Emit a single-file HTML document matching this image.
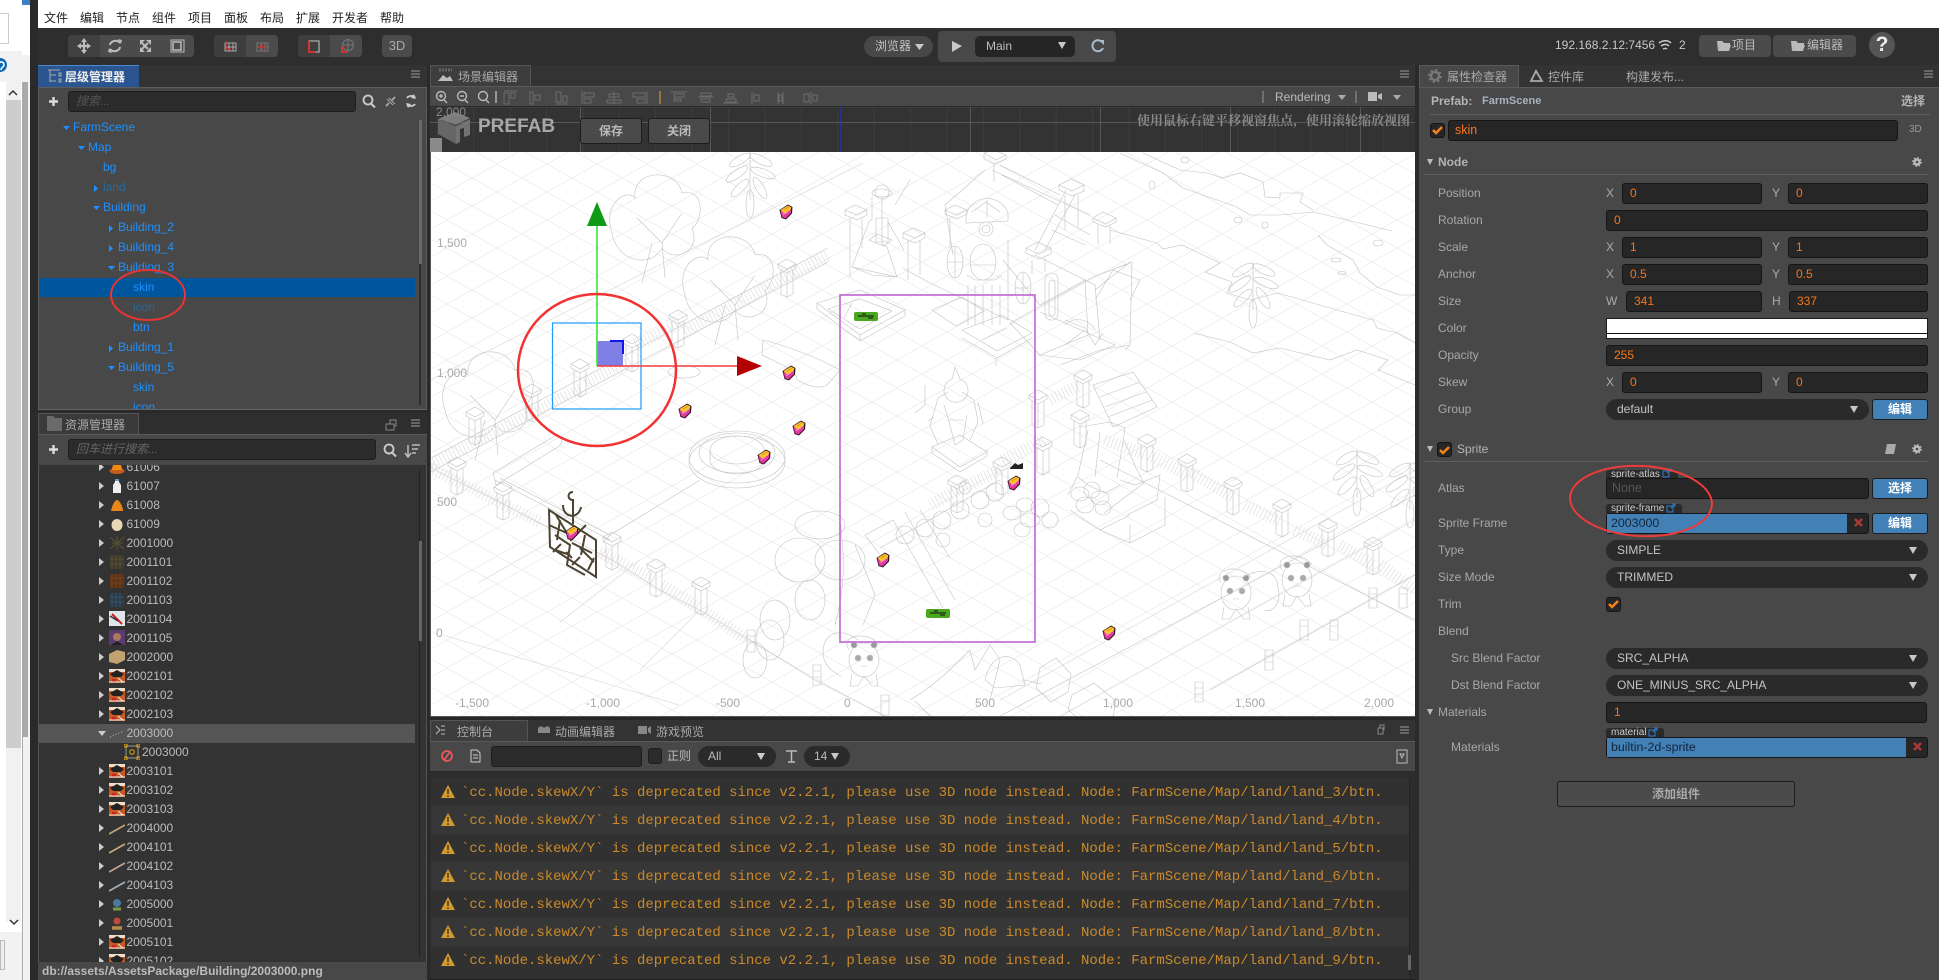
<!DOCTYPE html>
<html lang="zh"><head><meta charset="utf-8"><title>Cocos Creator</title>
<style>
html,body{margin:0;padding:0;width:1939px;height:980px;overflow:hidden;background:#2a2a2a}
body{position:relative;font:12px/16px "Liberation Sans","Noto Sans CJK SC",sans-serif;color:#bbb}
div,span.a{position:absolute;box-sizing:border-box}
.t{position:absolute;white-space:nowrap;line-height:16px}
.b{font-weight:bold}
.tree{color:#1e90ff}
.tree .t{height:16px}
.f{background:#262626;border:1px solid #161616;border-radius:3px;height:21px;color:#f5761c;line-height:19px;padding-left:7px;white-space:nowrap}
.s{background:#2a2a2a;border-radius:11px;height:21px;color:#c4c4c4;line-height:21px;padding-left:11px;white-space:nowrap}
.s:after{content:"";position:absolute;right:11px;top:7px;border-left:4px solid transparent;border-right:4px solid transparent;border-top:7px solid #c8c8c8}
.btn{background:#4281b7;border:1px solid #1c1c1c;border-radius:3px;color:#fff;font-weight:bold;text-align:center;line-height:19px;height:21px}
.lb{position:absolute;left:1438px;color:#a8a8a8;white-space:nowrap;line-height:16px}
.tag{background:#2a2a2a;border-radius:3px 3px 0 0;height:10px;font-size:10px;line-height:10px;color:#ccc;padding-left:5px;white-space:nowrap}
.tb{background:#4b4b4b;border-radius:4px;height:22px;top:35px}
.log{left:431px;width:978px;height:28px;font:14px/30px "Liberation Mono",monospace;letter-spacing:-.023px;color:#c98a2c;padding-left:30px;white-space:pre}
.r{position:relative;height:19px;line-height:19px;color:#bcbcbc;white-space:nowrap}
.r i{position:absolute;left:61px;top:5px;border-left:5px solid #ccc;border-top:4.5px solid transparent;border-bottom:4.5px solid transparent}
.r svg{position:absolute;left:71px;top:1px;width:16px;height:16px}
.r span{position:absolute;left:88.5px;top:0}
svg{display:block}
</style></head><body>

<!-- left strip -->
<div style="left:0;top:0;width:30px;height:980px;background:#f2f2f2"></div>
<div style="left:0;top:0;width:22px;height:51px;background:#fff"></div>
<div style="left:-6px;top:13px;width:15px;height:31px;border:1px solid #ccc;background:#fff"></div>
<div style="left:22px;top:0;width:8px;height:5px;background:#3c7fc4"></div>
<div style="left:22px;top:5px;width:8px;height:50px;background:#fff"></div>
<div style="left:0;top:82px;width:22px;height:850px;background:#fff"></div>
<div style="left:6px;top:82px;width:15px;height:840px;background:#f1f1f1"></div>
<div style="left:6px;top:100px;width:15px;height:648px;background:#cdcdcd"></div>
<div style="left:22px;top:82px;width:1px;height:898px;background:#aaa"></div>
<div style="left:23px;top:82px;width:5px;height:655px;background:#a9a9a9"></div>
<div style="left:-7px;top:58px;width:14px;height:14px;border-radius:50%;background:#0b6ab8"></div>
<div style="left:0;top:940px;width:5px;height:30px;border:1px solid #bbb;background:#eee"></div>
<div style="left:30px;top:0;width:8px;height:980px;background:#2a2a2a"></div>

<!-- top menu -->
<div style="left:38px;top:0;width:1901px;height:28px;background:#fff"></div>
<span class="t" style="left:44px;top:10px;color:#222">文件</span>
<span class="t" style="left:80px;top:10px;color:#222">编辑</span>
<span class="t" style="left:116px;top:10px;color:#222">节点</span>
<span class="t" style="left:152px;top:10px;color:#222">组件</span>
<span class="t" style="left:188px;top:10px;color:#222">项目</span>
<span class="t" style="left:224px;top:10px;color:#222">面板</span>
<span class="t" style="left:260px;top:10px;color:#222">布局</span>
<span class="t" style="left:296px;top:10px;color:#222">扩展</span>
<span class="t" style="left:332px;top:10px;color:#222">开发者</span>
<span class="t" style="left:380px;top:10px;color:#222">帮助</span>

<!-- toolbar -->
<div style="left:38px;top:28px;width:1901px;height:37px;background:#2e2e2e"></div>
<div class="tb" style="left:68px;width:126px"></div>
<div class="tb" style="left:68px;width:32px;background:#414141;border-radius:4px 0 0 4px"></div>
<div class="tb" style="left:214px;width:64px"></div>
<div class="tb" style="left:214px;width:32px;background:#3e3e3e;border-radius:4px 0 0 4px"></div>
<div class="tb" style="left:298px;width:64px"></div>
<div class="tb" style="left:298px;width:32px;background:#3e3e3e;border-radius:4px 0 0 4px"></div>
<div class="tb" style="left:382px;width:30px;text-align:center;line-height:22px;font-size:13px;color:#aaa">3D</div>
<div style="left:864px;top:36px;width:69px;height:21px;background:#484848;border-radius:11px;line-height:21px;padding-left:11px;color:#c4c4c4">浏览器</div>
<div style="left:938px;top:31px;width:178px;height:31px;background:#484848;border-radius:4px"></div>
<div style="left:975px;top:36px;width:100px;height:21px;background:#252525;border-radius:5px;line-height:21px;padding-left:11px;color:#bbb">Main</div>
<span class="t" style="left:1555px;top:37px;color:#c8c8c8;font-size:12px">192.168.2.12:7456</span>
<span class="t" style="left:1679px;top:37px;color:#c8c8c8">2</span>
<div class="tb" style="left:1699px;width:72px;color:#bbb;line-height:21px;padding-left:33px" >项目</div>
<div class="tb" style="left:1773px;width:83px;color:#bbb;line-height:21px;padding-left:34px">编辑器</div>
<div style="left:1869px;top:32px;width:26px;height:26px;border-radius:50%;background:#555;color:#eee;font:bold 21px/26px 'Liberation Sans',sans-serif;text-align:center">?</div>

<!-- hierarchy -->
<div style="left:38px;top:65px;width:389px;height:22px;background:#333"></div>
<div style="left:38px;top:65px;width:101px;height:23px;background:#2b5590;border-top:1px solid #4b8ad0"></div>
<span class="t b" style="left:65px;top:69px;color:#f0f0f0">层级管理器</span>
<div style="left:38px;top:87px;width:389px;height:323px;background:#484848;border:1px solid #5d5d5d;border-bottom-color:#666"></div>
<div style="left:68px;top:91px;width:288px;height:21px;background:#2b2b2b;border:1px solid #1e1e1e;border-radius:3px;color:#555;font-style:italic;line-height:19px;padding-left:7px">搜索...</div>
<div style="left:39px;top:278px;width:376px;height:19px;background:#00569c"></div>
<div class="tree" style="left:39px;top:116px;width:376px;height:293px;overflow:hidden">
<span class="t" style="left:34px;top:3px">FarmScene</span>
<span class="t" style="left:49px;top:23px">Map</span>
<span class="t" style="left:64px;top:43px">bg</span>
<span class="t" style="left:64px;top:63px;color:#2a6a9a">land</span>
<span class="t" style="left:64px;top:83px">Building</span>
<span class="t" style="left:79px;top:103px">Building_2</span>
<span class="t" style="left:79px;top:123px">Building_4</span>
<span class="t" style="left:79px;top:143px">Building_3</span>
<span class="t" style="left:94px;top:163px">skin</span>
<span class="t" style="left:94px;top:183px;color:#2a6a9a">icon</span>
<span class="t" style="left:94px;top:203px">btn</span>
<span class="t" style="left:79px;top:223px">Building_1</span>
<span class="t" style="left:79px;top:243px">Building_5</span>
<span class="t" style="left:94px;top:263px">skin</span>
<span class="t" style="left:94px;top:283px">icon</span>
</div>
<div style="left:419px;top:120px;width:2px;height:285px;background:#2e2e2e"></div>
<div style="left:419px;top:120px;width:3px;height:144px;background:#6a6a6a"></div>

<!-- assets -->
<div style="left:38px;top:413px;width:389px;height:21px;background:#2e2e2e"></div>
<div style="left:38px;top:413px;width:101px;height:21px;background:#3a3a3a;border:1px solid #555;border-bottom:0"></div>
<span class="t" style="left:65px;top:417px;color:#aaa">资源管理器</span>
<div style="left:38px;top:434px;width:389px;height:31px;background:#484848;border-top:1px solid #5a5a5a"></div>
<div style="left:68px;top:439px;width:308px;height:21px;background:#2b2b2b;border:1px solid #1e1e1e;border-radius:3px;color:#666;font-style:italic;line-height:19px;padding-left:7px">回车进行搜索...</div>
<div style="left:38px;top:465px;width:389px;height:497px;background:#333;overflow:hidden;border-left:1px solid #555;border-right:1px solid #555"></div>
<div style="left:39px;top:724px;width:376px;height:19px;background:#555"></div>
<div style="left:38px;top:465px;width:380px;height:497px;overflow:hidden">
<div style="left:0;top:-7px;width:380px">
<div class="r"><i></i><svg viewBox="0 0 16 16"><ellipse cx="8" cy="12" rx="7.5" ry="3" fill="#c85a1a"/><path d="M3 11C3 6 6 3 8 3s5 3 5 8z" fill="#f08a10"/></svg><span>61006</span></div>
<div class="r"><i></i><svg viewBox="0 0 16 16"><path d="M6 1h4v3l2 3v8H4V7l2-3z" fill="#eee"/><rect x="6" y="1" width="4" height="2" fill="#5a9ad8"/></svg><span>61007</span></div>
<div class="r"><i></i><svg viewBox="0 0 16 16"><path d="M2 14C3 8 6 3 8 3s6 6 6 11z" fill="#e8861a"/></svg><span>61008</span></div>
<div class="r"><i></i><svg viewBox="0 0 16 16"><ellipse cx="8" cy="9" rx="5.5" ry="6" fill="#e8d8b8"/></svg><span>61009</span></div>
<div class="r"><i></i><svg viewBox="0 0 16 16"><path d="M1 2l14 12M1 14L15 2M8 1v14M3 8h11" stroke="#544c34" stroke-width="1.3"/></svg><span>2001000</span></div>
<div class="r"><i></i><svg viewBox="0 0 16 16"><rect x="1" y="1" width="14" height="14" fill="#3f3a2c"/><path d="M3 1v14M7 1v14M11 1v14M1 5h14M1 10h14" stroke="#574f38"/></svg><span>2001101</span></div>
<div class="r"><i></i><svg viewBox="0 0 16 16"><rect x="1" y="1" width="14" height="14" fill="#5a3218"/><path d="M3 1v14M7 1v14M11 1v14M1 5h14M1 10h14" stroke="#74431f"/></svg><span>2001102</span></div>
<div class="r"><i></i><svg viewBox="0 0 16 16"><rect x="1" y="1" width="14" height="14" fill="#2a3a4a"/><path d="M3 1v14M7 1v14M11 1v14M1 5h14M1 10h14" stroke="#3c5064"/></svg><span>2001103</span></div>
<div class="r"><i></i><svg viewBox="0 0 16 16"><rect width="16" height="15" fill="#dfe6ea"/><path d="M3 3l10 10" stroke="#c22" stroke-width="2"/><path d="M1 5l8 5" stroke="#335" stroke-width="1.5"/></svg><span>2001104</span></div>
<div class="r"><i></i><svg viewBox="0 0 16 16"><rect width="16" height="15" fill="#5a3a70"/><circle cx="8" cy="7" r="4" fill="#a87860"/><path d="M2 15l6-4 6 4z" fill="#222"/></svg><span>2001105</span></div>
<div class="r"><i></i><svg viewBox="0 0 16 16"><path d="M0 5l8-4 8 2v8l-8 4-8-2z" fill="#c2a273"/></svg><span>2002000</span></div>
<div class="r"><i></i><svg viewBox="0 0 16 16"><use href="#p"/></svg><span>2002101</span></div>
<div class="r"><i></i><svg viewBox="0 0 16 16"><use href="#p"/></svg><span>2002102</span></div>
<div class="r"><i></i><svg viewBox="0 0 16 16"><use href="#p"/></svg><span>2002103</span></div>
<div class="r"><i style="left:60px;top:7px;border-top:5px solid #ccc;border-left:4.5px solid transparent;border-right:4.5px solid transparent;border-bottom:0"></i><svg viewBox="0 0 16 16"><path d="M1 12l14-6" stroke="#aaa" stroke-dasharray="1 2" stroke-width="1.3"/></svg><span>2003000</span></div>
<div class="r"><svg viewBox="0 0 16 16" style="left:86px"><rect x="2" y="2" width="12" height="12" fill="#333" stroke="#999"/><circle cx="8" cy="8" r="2.3" fill="none" stroke="#e8a800"/><path d="M0 0h3v3H0zM13 0h3v3h-3zM0 13h3v3H0zM13 13h3v3h-3z" fill="none" stroke="#e8a800"/></svg><span style="left:104px">2003000</span></div>
<div class="r"><i></i><svg viewBox="0 0 16 16"><use href="#p"/></svg><span>2003101</span></div>
<div class="r"><i></i><svg viewBox="0 0 16 16"><use href="#p"/></svg><span>2003102</span></div>
<div class="r"><i></i><svg viewBox="0 0 16 16"><use href="#p"/></svg><span>2003103</span></div>
<div class="r"><i></i><svg viewBox="0 0 16 16"><path d="M0 14L16 5" stroke="#c2a273" stroke-width="1.8"/></svg><span>2004000</span></div>
<div class="r"><i></i><svg viewBox="0 0 16 16"><path d="M0 14L16 5" stroke="#c8aa7c" stroke-width="1.8"/></svg><span>2004101</span></div>
<div class="r"><i></i><svg viewBox="0 0 16 16"><path d="M0 14L16 5" stroke="#c4a090" stroke-width="1.8"/></svg><span>2004102</span></div>
<div class="r"><i></i><svg viewBox="0 0 16 16"><path d="M0 14L16 5" stroke="#a0aebc" stroke-width="1.8"/></svg><span>2004103</span></div>
<div class="r"><i></i><svg viewBox="0 0 16 16"><circle cx="8" cy="7" r="4" fill="#4a7a9a"/><path d="M4 13h8" stroke="#7a9a4a" stroke-width="3"/></svg><span>2005000</span></div>
<div class="r"><i></i><svg viewBox="0 0 16 16"><circle cx="8" cy="6" r="3.5" fill="#c04a3a"/><path d="M3 13h10" stroke="#b88a4a" stroke-width="3.5"/></svg><span>2005001</span></div>
<div class="r"><i></i><svg viewBox="0 0 16 16"><use href="#p"/></svg><span>2005101</span></div>
<div class="r"><i></i><svg viewBox="0 0 16 16"><use href="#p"/></svg><span>2005102</span></div>
</div></div>
<div style="left:419px;top:470px;width:1px;height:487px;background:#222"></div>
<div style="left:419px;top:541px;width:3px;height:100px;background:#666"></div>
<div style="left:38px;top:962px;width:389px;height:18px;background:#484848;color:#bbb;line-height:18px;padding-left:4px;font-size:12px;font-weight:bold;white-space:nowrap">db://assets/AssetsPackage/Building/2003000.png</div>

<!-- scene panel -->
<div style="left:430px;top:65px;width:985px;height:22px;background:#333"></div>
<div style="left:430px;top:65px;width:101px;height:22px;background:#3d3d3d;border:1px solid #555;border-bottom:0"></div>
<span class="t" style="left:458px;top:69px;color:#aaa">场景编辑器</span>
<div style="left:430px;top:86px;width:985px;height:21px;background:#484848;border-top:1px solid #5a5a5a;border-bottom:1px solid #2a2a2a"></div>
<span class="t" style="left:1275px;top:89px;color:#bbb">Rendering</span>
<div style="left:430px;top:107px;width:985px;height:45px;background:#333"></div>
<div style="left:431px;top:152px;width:984px;height:564px;background:#fff"></div>
<div style="left:430px;top:152px;width:1px;height:564px;background:#555"></div>
<div style="left:430px;top:716px;width:985px;height:1px;background:#555"></div>
<div style="left:1415px;top:65px;width:4px;height:915px;background:#2a2a2a"></div>
<div style="left:430px;top:717px;width:985px;height:3px;background:#262626"></div>

<!-- scene strip background (below buttons) -->
<svg style="position:absolute;left:0;top:0" width="1939" height="160" viewBox="0 0 1939 160">
<defs><pattern id="g2" width="36.4" height="45" patternUnits="userSpaceOnUse" x="0" y="107"><path d="M.5 0v45M0 .5h36.400" stroke="#3d3d3d" fill="none"/></pattern></defs>
<rect x="431" y="107" width="984" height="45" fill="url(#g2)"/>
<g stroke="#575757"><path d="M580.500 107v45M710.500 107v45M970.500 107v45M1100.500 107v45M1230.500 107v45M1360.500 107v45M430 122.500h985"/></g>
<path d="M840.500 107v45" stroke="#2b3490"/>
<path d="M438 119l17-7 15 6-14 7z" fill="#7c7c7c"/>
<path d="M438 119l18 7v18l-18-10z" fill="#666"/>
<path d="M456 126l14-7v16l-6 2v-9l-4 1v13l-4 2z" fill="#727272"/>
<rect x="430" y="138" width="12" height="14" fill="#8a8a8a"/>
</svg>

<!-- console -->
<div style="left:430px;top:720px;width:985px;height:21px;background:#333"></div>
<div style="left:430px;top:720px;width:98px;height:22px;background:#3d3d3d;border:1px solid #555;border-bottom:0"></div>
<span class="t" style="left:457px;top:724px;color:#aaa">控制台</span>
<span class="t" style="left:555px;top:724px;color:#aaa">动画编辑器</span>
<span class="t" style="left:656px;top:724px;color:#aaa">游戏预览</span>
<div style="left:430px;top:741px;width:985px;height:31px;background:#484848;border-top:1px solid #5a5a5a;border-bottom:1px solid #2a2a2a"></div>
<div style="left:491px;top:746px;width:151px;height:21px;background:#2b2b2b;border:1px solid #1e1e1e;border-radius:3px"></div>
<div style="left:648px;top:748px;width:14px;height:16px;background:#2b2b2b;border:1px solid #1e1e1e;border-radius:3px"></div>
<span class="t" style="left:667px;top:748px;color:#bbb">正则</span>
<div class="s" style="left:698px;top:746px;width:78px;padding-left:10px;color:#bbb">All</div>
<div class="s" style="left:804px;top:746px;width:46px;padding-left:10px;color:#bbb">14</div>
<div style="left:430px;top:772px;width:985px;height:208px;background:#2c2c2c"></div>
<div class="log" style="top:778px;background:#313131">`cc.Node.skewX/Y` is deprecated since v2.2.1, please use 3D node instead. Node: FarmScene/Map/land/land_3/btn.</div>
<div class="log" style="top:806px;background:#373737">`cc.Node.skewX/Y` is deprecated since v2.2.1, please use 3D node instead. Node: FarmScene/Map/land/land_4/btn.</div>
<div class="log" style="top:834px;background:#313131">`cc.Node.skewX/Y` is deprecated since v2.2.1, please use 3D node instead. Node: FarmScene/Map/land/land_5/btn.</div>
<div class="log" style="top:862px;background:#373737">`cc.Node.skewX/Y` is deprecated since v2.2.1, please use 3D node instead. Node: FarmScene/Map/land/land_6/btn.</div>
<div class="log" style="top:890px;background:#313131">`cc.Node.skewX/Y` is deprecated since v2.2.1, please use 3D node instead. Node: FarmScene/Map/land/land_7/btn.</div>
<div class="log" style="top:918px;background:#373737">`cc.Node.skewX/Y` is deprecated since v2.2.1, please use 3D node instead. Node: FarmScene/Map/land/land_8/btn.</div>
<div class="log" style="top:946px;background:#313131;height:33px">`cc.Node.skewX/Y` is deprecated since v2.2.1, please use 3D node instead. Node: FarmScene/Map/land/land_9/btn.</div>
<div style="left:430px;top:979px;width:985px;height:1px;background:#1e1e1e"></div>
<div style="left:1409px;top:778px;width:1px;height:197px;background:#222"></div>
<div style="left:1408px;top:955px;width:3px;height:15px;background:#666"></div>

<!-- inspector -->
<div style="left:1419px;top:65px;width:520px;height:22px;background:#333"></div>
<div style="left:1419px;top:65px;width:100px;height:23px;background:#484848;border:1px solid #5a5a5a;border-bottom:0"></div>
<span class="t" style="left:1447px;top:69px;color:#aaa">属性检查器</span>
<span class="t" style="left:1548px;top:69px;color:#aaa">控件库</span>
<span class="t" style="left:1626px;top:69px;color:#aaa">构建发布...</span>
<div style="left:1419px;top:87px;width:520px;height:893px;background:#484848;border-top:1px solid #5a5a5a"></div>
<span class="t b" style="left:1431px;top:93px;color:#b4b4b4">Prefab:</span>
<span class="t b" style="left:1482px;top:93px;color:#a9b3bd;font-size:11px">FarmScene</span>
<span class="t b" style="left:1901px;top:93px;color:#b4b4b4">选择</span>
<div style="left:1430px;top:114px;width:500px;height:1px;background:#5e5e5e"></div>
<div style="left:1430px;top:123px;width:15px;height:15px;background:#262626;border:1px solid #161616;border-radius:3px"></div>
<div class="f" style="left:1448px;top:120px;width:450px;font-size:12.5px;padding-left:6px">skin</div>
<span class="t" style="left:1909px;top:122px;color:#999;font-size:10px">3D</span>
<span class="t b" style="left:1438px;top:154px;color:#b4b4b4">Node</span>
<div style="left:1424px;top:174px;width:505px;height:1px;background:#5e5e5e"></div>

<span class="lb" style="top:185px">Position</span>
<span class="t" style="left:1606px;top:185px;color:#aaa">X</span><div class="f" style="left:1622px;top:183px;width:140px">0</div>
<span class="t" style="left:1772px;top:185px;color:#aaa">Y</span><div class="f" style="left:1788px;top:183px;width:140px">0</div>
<span class="lb" style="top:212px">Rotation</span><div class="f" style="left:1606px;top:210px;width:322px">0</div>
<span class="lb" style="top:239px">Scale</span>
<span class="t" style="left:1606px;top:239px;color:#aaa">X</span><div class="f" style="left:1622px;top:237px;width:140px">1</div>
<span class="t" style="left:1772px;top:239px;color:#aaa">Y</span><div class="f" style="left:1788px;top:237px;width:140px">1</div>
<span class="lb" style="top:266px">Anchor</span>
<span class="t" style="left:1606px;top:266px;color:#aaa">X</span><div class="f" style="left:1622px;top:264px;width:140px">0.5</div>
<span class="t" style="left:1772px;top:266px;color:#aaa">Y</span><div class="f" style="left:1788px;top:264px;width:140px">0.5</div>
<span class="lb" style="top:293px">Size</span>
<span class="t" style="left:1606px;top:293px;color:#aaa">W</span><div class="f" style="left:1626px;top:291px;width:136px">341</div>
<span class="t" style="left:1772px;top:293px;color:#aaa">H</span><div class="f" style="left:1789px;top:291px;width:139px">337</div>
<span class="lb" style="top:320px">Color</span>
<div style="left:1606px;top:318px;width:322px;height:21px;background:#fff;border:1px solid #1a1a1a"></div>
<div style="left:1606px;top:333px;width:322px;height:1px;background:#111"></div>
<span class="lb" style="top:347px">Opacity</span><div class="f" style="left:1606px;top:345px;width:322px">255</div>
<span class="lb" style="top:374px">Skew</span>
<span class="t" style="left:1606px;top:374px;color:#aaa">X</span><div class="f" style="left:1622px;top:372px;width:140px">0</div>
<span class="t" style="left:1772px;top:374px;color:#aaa">Y</span><div class="f" style="left:1788px;top:372px;width:140px">0</div>
<span class="lb" style="top:401px">Group</span>
<div class="s" style="left:1606px;top:399px;width:263px">default</div>
<div class="btn" style="left:1872px;top:399px;width:56px">编辑</div>

<div style="left:1437px;top:442px;width:15px;height:15px;background:#262626;border:1px solid #161616;border-radius:3px"></div>
<span class="t b" style="left:1457px;top:441px;color:#b4b4b4;font-weight:normal">Sprite</span>
<div style="left:1424px;top:461px;width:505px;height:1px;background:#5e5e5e"></div>

<span class="lb" style="top:480px">Atlas</span>
<div class="tag" style="left:1606px;top:470px;width:72px">sprite-atlas</div>
<div class="f" style="left:1606px;top:478px;width:263px;color:#555;font-size:12.5px;padding-left:5px;height:21px">None</div>
<div class="btn" style="left:1872px;top:478px;width:56px">选择</div>
<span class="lb" style="top:515px">Sprite Frame</span>
<div class="tag" style="left:1606px;top:504px;width:76px">sprite-frame</div>
<div class="f" style="left:1606px;top:513px;width:263px"></div>
<div style="left:1607px;top:514px;width:240px;height:19px;background:#4280b6;color:#12263b;line-height:19px;padding-left:4px;font-size:12.4px">2003000</div>
<div class="btn" style="left:1872px;top:513px;width:56px">编辑</div>
<span class="lb" style="top:542px">Type</span><div class="s" style="left:1606px;top:540px;width:322px">SIMPLE</div>
<span class="lb" style="top:569px">Size Mode</span><div class="s" style="left:1606px;top:567px;width:322px">TRIMMED</div>
<span class="lb" style="top:596px">Trim</span>
<div style="left:1606px;top:597px;width:15px;height:15px;background:#262626;border:1px solid #161616;border-radius:3px"></div>
<span class="lb" style="top:623px">Blend</span>
<span class="lb" style="top:650px;left:1451px">Src Blend Factor</span><div class="s" style="left:1606px;top:648px;width:322px">SRC_ALPHA</div>
<span class="lb" style="top:677px;left:1451px">Dst Blend Factor</span><div class="s" style="left:1606px;top:675px;width:322px">ONE_MINUS_SRC_ALPHA</div>
<span class="lb" style="top:704px">Materials</span><div class="f" style="left:1606px;top:702px;width:321px;padding-left:7px">1</div>
<span class="lb" style="top:739px;left:1451px">Materials</span>
<div class="tag" style="left:1606px;top:728px;width:58px">material</div>
<div class="f" style="left:1606px;top:737px;width:322px"></div>
<div style="left:1607px;top:738px;width:299px;height:19px;background:#4280b6;color:#12263b;line-height:19px;padding-left:4px;font-size:12.4px;font-weight:normal">builtin-2d-sprite</div>
<div style="left:1557px;top:781px;width:238px;height:26px;background:#4b4b4b;border:1px solid #1e1e1e;border-radius:3px;color:#aaa;text-align:center;line-height:24px;font-weight:bold">添加组件</div>

<!-- scene top strip content -->
<span class="t" style="left:436px;top:104px;color:#888;font-size:12px">2,000</span>
<span class="t b" style="left:478px;top:117px;color:#a8a8a8;font-size:19px;line-height:20px">PREFAB</span>
<div style="left:580px;top:118px;width:62px;height:26px;background:#4a4a4a;border:1px solid #1c1c1c;border-radius:3px;color:#bbb;text-align:center;line-height:24px;font-weight:bold">保存</div>
<div style="left:648px;top:118px;width:62px;height:26px;background:#4a4a4a;border:1px solid #1c1c1c;border-radius:3px;color:#bbb;text-align:center;line-height:24px;font-weight:bold">关闭</div>

<!-- overlay svg -->
<svg style="position:absolute;left:0;top:0" width="1939" height="980" viewBox="0 0 1939 980">
<defs>
<symbol id="p" viewBox="0 0 16 16"><rect y="1" width="16" height="14" fill="#c75a22"/><path d="M0 1h16v3H0z" fill="#f0ddc8"/><path d="M1 6l7-4 7 4-3 3H4z" fill="#222"/><path d="M3 11h4v3H3z" fill="#c22"/><path d="M9 10l5 4" stroke="#eee"/><path d="M0 14h16" stroke="#eee"/></symbol>
<pattern id="g" width="50" height="28" patternUnits="userSpaceOnUse" x="22" y="10"><path d="M0 0L50 28M0 28L50 0" stroke="#ededed" stroke-width=".8" fill="none"/></pattern>
<clipPath id="c"><rect x="431" y="152" width="984" height="564"/></clipPath>
<g id="gem"><path d="M-6.500-2L2-7.500 6.500-5 6 1.500 0 7.500-4.500 6z" fill="#2c1028"/><path d="M-5.500-1L5-3.500 5 1-.5 6.500-4 5z" fill="#e43a9e"/><path d="M-5.500-2L2-6.500 5.500-4.500 4-1.500-2 1.500z" fill="#f7c52a"/><path d="M-2-2L3-5" stroke="#ee8a1e" stroke-width="1"/><path d="M-3 2.500L2 0" stroke="#f58ad0" stroke-width="1"/></g>
<g id="post"><path d="M-9-3L0-8 9-3 0 2zM-9-3v4L0 6 9 1V-3M-6 3v24l6 3 6-3V3M0 6v24"/></g>
<g id="plant"><path d="M0-28V20"/><ellipse cx="-10" cy="-20" rx="12" ry="4" transform="rotate(-30 -10 -20)"/><ellipse cx="11" cy="-20" rx="12" ry="4" transform="rotate(25 11 -20)"/><ellipse cx="-13" cy="-6" rx="13" ry="4" transform="rotate(-35 -13 -6)"/><ellipse cx="13" cy="-7" rx="13" ry="4" transform="rotate(20 13 -7)"/><ellipse cx="-10" cy="8" rx="12" ry="4" transform="rotate(-45 -10 8)"/><ellipse cx="10" cy="8" rx="12" ry="4" transform="rotate(60 10 8)"/><ellipse cx="0" cy="24" rx="4" ry="14"/></g>
<g id="tree"><path d="M-45 5C-55-25-30-40-22-30-25-60 20-60 25-35 50-40 45-5 35 0 45 25 15 35 5 20-5 40-40 35-45 5zM-5 15L-15 55M5 15L8 50M-20-10L5 15 25-15"/></g>
<g id="panda"><ellipse cx="0" cy="0" rx="15" ry="17"/><circle cx="-6" cy="-2" r="3" fill="#aaa"/><circle cx="6" cy="-2" r="3" fill="#aaa"/><circle cx="-10" cy="-15" r="3" fill="#999"/><circle cx="10" cy="-15" r="3" fill="#999"/><path d="M-3 6h6M-12 14L-14 26h8L0 16 8 26h6L12 14"/><path d="M-15-10C-25-25 5-30 15-15"/></g>
</defs>

<text x="1410" y="125" text-anchor="end" font-family="'Liberation Serif','Noto Serif CJK SC',serif" font-size="13" font-weight="bold" fill="#8a8a8a">使用鼠标右键平移视窗焦点，使用滚轮缩放视图</text>

<!-- scene toolbar icons -->
<g fill="none" stroke="#bbb" stroke-width="1.4"><circle cx="441" cy="96" r="4.5"/><path d="M444 100l3 3M439 96h4M441 94v4"/><circle cx="462" cy="96" r="4.5"/><path d="M465 100l3 3M460 96h4"/><circle cx="483" cy="96" r="4.5"/><path d="M486 100l3 3"/><path d="M496 91v12" stroke="#bbb"/></g>
<g fill="none" stroke="#6c6c6c"><path d="M504 91h13M504 93h5v11h-5zM511 93h4v5h-4zM530 92v12h3V92zM535 95h5v5h-5zM556 104h13M556 92h5v10h-5zM563 96h4v6h-4zM582 91v13M584 93h10v4h-10zM584 99h7v4h-7zM614 91v13M609 94h10v3h-10zM607 100h14v3h-14zM647 91v13M633 93h12v4h-12zM637 99h8v4h-8zM671 92h16M674 94h10v3h-10zM674 99h7v2h-7zM698 97h16M701 93h10v3h-10zM701 99h9v3h-9zM723 103h16M726 99h10v3h-10zM728 94h6v3h-6zM752 92v12M754 95h5v6h-5zM778 92v12M783 92v12M779 95h3v6h-3zM811 92v12M804 94h5v8h-5zM813 95h4v6h-4z"/><path d="M660 91v13" stroke="#c09040" stroke-width="1.3"/></g>
<g fill="none" stroke="#999"><path d="M1263 91v12M1356 91v12"/></g>
<path d="M1338 95h8l-4 5zM1393 95h8l-4 5z" fill="#aaa"/>
<path d="M1368 92h9v9h-9zM1378 95l4-2v7l-4-2z" fill="#bbb"/>

<!-- tab hamburgers -->
<g stroke="#888" stroke-width="1.2"><path d="M411 71h9M411 74h9M411 77h9M1400 71h9M1400 74h9M1400 77h9M1924 71h9M1924 74h9M1924 77h9M411 420h9M411 423h9M411 426h9M1400 727h9M1400 730h9M1400 733h9"/></g>
<g fill="none" stroke="#888"><path d="M386 424h8v6h-8zM390 424v-4h6v6h-2M1378 728h5v6h-5zM1380 728v-3h4v5"/></g>

<!-- top toolbar icons -->
<g stroke="#bdbdbd" fill="#bdbdbd"><path d="M84 41v10M79 46h10" stroke-width="2.2"/><path d="M84 38l-3 4h6zM84 54l-3-4h6zM77 46l4-3v6zM91 46l-4-3v6z" stroke="none"/></g>
<g fill="none" stroke="#bdbdbd" stroke-width="2"><path d="M110 45c.5-4 7-6 10-2M120 47c-.5 4-7 6-10 2"/><path d="M142 43l6 6M148 43l-6 6" /><path d="M173 42h8v8h-8z" stroke-width="1.500"/><path d="M171 40h13v12h-13z" stroke-width="1"/></g>
<path d="M118 39l4 1-1 4zM112 53l-4-1 1-4zM140 40h5l-5 5zM151 52h-5l5-5zM151 40h-5l5 5zM140 52h5l-5-5z" fill="#bdbdbd"/>
<g fill="none" stroke="#aaa"><path d="M225 43h11v8h-11zM229 43v8M233 43v8M225 47h11"/><path d="M257 43h11v8h-11zM261 43v8M265 43v8M257 47h11" stroke="#777"/><path d="M309 41h10v11h-10z" stroke-width="1.3"/><circle cx="348" cy="45" r="5.5" stroke="#777"/><path d="M342.500 45h11M348 39.500v11" stroke="#777"/></g>
<path d="M226 41v8h5M262 43v8M258 47h8" stroke="#d83030" fill="none" stroke-width="1.200"/>
<path d="M309 41v11h7M342 46v6h6" stroke="#e03030" fill="none" stroke-width="1.800"/>
<!-- browser etc -->
<path d="M915 44h9l-4.5 6zM1058 42h8l-4 7z" fill="#c8c8c8"/>
<path d="M952 41l10 5-10 6z" fill="#c8c8c8"/>
<path d="M1102 42a5.500 5.500 0 1 0 1 6" fill="none" stroke="#a8bcd0" stroke-width="2"/><path d="M1099 40h5v5z" fill="#a8bcd0"/>
<g fill="none" stroke="#ccc" stroke-width="1.500"><path d="M1659 43c4-3 9-3 12 0M1661 46c3-2 6-2 8 0M1663 49c2-1 3-1 4 0"/></g>
<path d="M1717 41h5l2 2h6v2h-9l-3 6zM1791 41h5l2 2h6v2h-9l-3 6z" fill="#bbb"/><path d="M1718 51l3-6h10l-2 6zM1792 51l3-6h10l-2 6z" fill="#bbb"/>

<!-- hierarchy arrows -->
<g fill="#1e90ff"><path d="M63 126h7l-3.500 4zM78 146h7l-3.500 4zM93 206h7l-3.500 4zM108 266h7l-3.500 4zM108 366h7l-3.500 4zM94 185l4 3.500-4 3.500zM109 225l4 3.500-4 3.500zM109 245l4 3.500-4 3.500zM109 345l4 3.500-4 3.500z"/></g>
<!-- hierarchy icons -->
<g fill="none" stroke="#aaa"><path d="M48 70h12M50 70v12M50 75h6M50 81h6"/><path d="M59 73h2v3h-2zM59 79h2v3h-2z"/></g>
<path d="M53.500 97v9M49 101.500h9" stroke="#ddd" stroke-width="2.400"/>
<circle cx="368" cy="100" r="4.500" fill="none" stroke="#ccc" stroke-width="1.800"/><path d="M371.500 104l3.500 3.500" stroke="#ccc" stroke-width="2"/>
<path d="M386 106l3-3M392 100l3-3" stroke="#aaa" stroke-width="1.800"/><path d="M387 99l6 6M389 98l6 6" stroke="#aaa" fill="none" stroke-width="1"/>
<path d="M407 98c1-2 6-3 8-1M415 104c-1 2-6 3-8 1" fill="none" stroke="#ccc" stroke-width="1.800"/><path d="M414 94l2 5-5-1zM408 108l-2-5 5 1z" fill="#ccc"/>
<!-- assets toolbar icons -->
<path d="M47 416h6l2 2h7v13H47z" fill="#6a6a6a"/>
<path d="M53.500 445v9M49 449.500h9" stroke="#ddd" stroke-width="2.400"/>
<circle cx="389" cy="449" r="4.500" fill="none" stroke="#ccc" stroke-width="1.800"/><path d="M392.500 453l3.500 3.500" stroke="#ccc" stroke-width="2"/>
<path d="M408 445v11M405 453l3 4 3-4M412 445h8M412 449h6M412 453h4" stroke="#bbb" stroke-width="1.500" fill="none"/>

<!-- scene tab icon etc -->
<path d="M438 81l5-6 4 3 3-2 3 5z" fill="#bbb"/><path d="M439 70h13" stroke="#666" stroke-width="3" stroke-dasharray="2 1"/>
<!-- console tab + toolbar icons -->
<path d="M436 726l4 4-4 4M441 726h4M441 730h4M441 734h4" stroke="#bbb" fill="none"/>
<path d="M538 728c3-3 5-1 6 0 1-1 4-3 6 0v5h-12z" fill="#888"/><path d="M638 726h9v8h-9zM648 728l3-2v8l-3-2z" fill="#888"/>
<circle cx="447" cy="756" r="5" fill="none" stroke="#e8555a" stroke-width="1.800"/><path d="M444 760l6-8" stroke="#e8555a" stroke-width="1.800"/>
<path d="M471 750h6l3 3v9h-9zM473 755h5M473 758h5" fill="none" stroke="#ccc"/>
<path d="M786 751h11M791.500 751v11M788 762h7" stroke="#bbb" stroke-width="1.500" fill="none"/>
<path d="M1397 750h10v13h-10zM1400 754h4l-2 4z" fill="none" stroke="#bbb"/>
<path d="M757 753h8l-4 7z" fill="#ccc" opacity=".8"/>
<!-- warning triangles -->
<g fill="#d29a2e"><path d="M448 785l7 13h-14z"/><path d="M448 813l7 13h-14z"/><path d="M448 841l7 13h-14z"/><path d="M448 869l7 13h-14z"/><path d="M448 897l7 13h-14z"/><path d="M448 925l7 13h-14z"/><path d="M448 953l7 13h-14z"/></g>
<g stroke="#3a2a10" stroke-width="1.300" stroke-dasharray="5 1.200 2"><path d="M448 789v8M448 817v8M448 845v8M448 873v8M448 901v8M448 929v8M448 957v8"/></g>
<!-- inspector icons -->
<circle cx="1435" cy="76" r="4" fill="none" stroke="#777" stroke-width="2.500"/><circle cx="1435" cy="76" r="6" fill="none" stroke="#777" stroke-width="2" stroke-dasharray="2.300 2.400"/>
<path d="M1536 71l6 10h-11z" fill="none" stroke="#aaa" stroke-width="1.800"/>
<path d="M1433 130l3 3 6-6" fill="none" stroke="#f5821e" stroke-width="2.500"/>
<path d="M1440 450l3 3 6-6" fill="none" stroke="#f5821e" stroke-width="2.500"/>
<path d="M1609 604l3 3 6-6" fill="none" stroke="#f5821e" stroke-width="2.500"/>
<path d="M1427 159h6l-3 6zM1427 446h6l-3 6zM1427 709h6l-3 6z" fill="#bbb"/>
<g fill="none" stroke="#bbb"><circle cx="1917" cy="162" r="2.500" stroke-width="2.400"/><circle cx="1917" cy="162" r="4" stroke-width="1.800" stroke-dasharray="1.600 1.540"/><circle cx="1917" cy="449" r="2.500" stroke-width="2.400"/><circle cx="1917" cy="449" r="4" stroke-width="1.800" stroke-dasharray="1.600 1.540"/></g>
<path d="M1887 444h9l-2 10h-9z" fill="#aaa"/>
<g fill="none" stroke="#2f7fd0"><path d="M1663 471h6v6h-6zM1667 473l4-4M1668 469h3v3M1667 506h6v6h-6zM1671 508l4-4M1672 504h3v3M1649 730h6v6h-6zM1653 732l4-4M1654 728h3v3"/></g>
<path d="M1855 519l7 7M1862 519l-7 7M1914 743l7 7M1921 743l-7 7" stroke="#a93a3a" stroke-width="2.400"/>

<!-- CANVAS -->
<g clip-path="url(#c)">
<rect x="431" y="152" width="984" height="564" fill="url(#g)"/>
<g fill="none" stroke="#e0e0e0" stroke-width=".8"><path d="M443 635L679 705M478 583L553 540M560 622L640 560M640 670L700 610M1000 700L1415 470M430 380L863 163M1060 716L1415 520"/></g>
<g fill="none" stroke="#c2c2c2" stroke-width=".6">
<!-- shore -->
<path d="M1120 153L1163 173 1183 188 1237 207 1250 215 1280 215 1313 212 1347 220 1392 231"/>
<path d="M1143 153L1180 170 1207 173 1223 178 1240 173 1263 182 1265 197 1280 198 1280 193 1303 193 1300 202 1313 210"/>
<path d="M1110 230L1157 243 1163 249 1182 245 1220 263 1205 272 1232 282 1227 293 1250 300 1278 293 1330 308 1373 320 1377 328 1397 333 1415 343"/>
<path d="M1193 333L1230 342 1253 353 1280 348 1330 360 1357 350 1388 360 1378 370 1415 385"/>
<path d="M1318 235L1327 245 1353 260 1360 273 1377 287 1400 295 1415 295"/>
<ellipse cx="1185" cy="160" rx="4" ry="3"/><ellipse cx="1152" cy="185" rx="3" ry="4"/><ellipse cx="1238" cy="220" rx="4" ry="3"/><circle cx="1265" cy="225" r="3"/><ellipse cx="1336" cy="260" rx="5" ry="2"/><ellipse cx="1342" cy="273" rx="4" ry="1.500"/><ellipse cx="1378" cy="243" rx="5" ry="3"/>
<!-- plants -->
<use href="#plant" x="1253" y="290"/><use href="#plant" x="1357" y="478"/><use href="#plant" x="750" y="180"/><use href="#plant" x="1410" y="490"/>
<!-- trees -->
<use href="#tree" x="490" y="405"/><use href="#tree" x="730" y="290"/><use href="#tree" x="657" y="228"/>
<!-- house -->
<path d="M930 283L903 268M930 283L1008 320M1010 323L1093 277 1132 262M1008 320V240M985 170L945 205 953 255M992 170L1057 200 1090 215M1000 165L1060 195M1002 175L1058 205M1035 250L1066 190M1045 250L1075 195M1055 215L1090 235M1052 230L1085 245M1035 255L1095 285 1100 340M1093 277L1125 265 1132 262 1130 345 1125 350M1095 290L1130 262M1095 300L1113 270 1140 280 1130 300M1003 260L1040 305 1085 280 1088 335 1040 355 1010 323M1040 355L1080 360 1115 345 1040 312M1060 365L1100 350 1130 345"/>
<path d="M984 153l10-3 12 5-10 5zM984 153v6l10 5 12-5v-4M994 164v18"/><path d="M1059 185l12-6 13 6-12 6zM1059 185v5l13 6 12-5v-6M1065 195v35M1078 195v32"/><path d="M1026 248l12-6 13 6-12 6zM1026 248v5l13 6 12-5v-6M1032 260v14M1045 258v14"/><path d="M1093 218l10-6 13 6-10 6zM1093 218v4l13 5 10-5v-4M1098 225v20M1110 226v18"/><path d="M945 210l10-5 12 5-10 5zM945 210v4l12 5 10-5v-4M950 218v30"/>
<path d="M966 215a22 22 0 0 1 42-2v8l-42 2zM972 212l14-10 14 10M987 200v18"/>
<circle cx="986" cy="229" r="7"/><circle cx="986" cy="229" r="4"/>
<ellipse cx="955" cy="262" rx="8" ry="16"/><path d="M955 246v32M947 262h16"/>
<ellipse cx="983" cy="262" rx="13" ry="18"/><path d="M970 265h26M968 285V325M1000 285V325M975 285V325M983 285V325M992 285V325M967 275l8 5h20l7-5"/>
<ellipse cx="1023" cy="288" rx="8" ry="16"/><path d="M1023 272v32M1015 288h16"/>
<rect x="1045" y="273" width="13" height="47" rx="6"/><rect x="1049" y="280" width="6" height="36" rx="3"/>
<path d="M1065 320l20 8 10 17 8-12M1085 330l-20 15M1065 325c10-10 25-5 30 5"/>
<!-- left tower -->
<circle cx="882" cy="192" r="7"/><ellipse cx="882" cy="193" rx="10" ry="4"/><path d="M872 197v22l-3 3 -17 45 45 10-10-30-5-3V197M876 218h12v24h-12zM869 240l8-6 15 6-8 6zM852 267l20 8 25 2M888 222l16 28M895 205l15-25M903 233l10-5 12 5-10 5zM903 233v5l12 5 10-5v-5M908 240v40M920 240v35M845 210l10-5 12 5-10 5zM845 210v5l12 5 10-5v-5M850 218v60M862 218v30"/>
<!-- platform -->
<path d="M817 303l43-13 45 20-45 25zM817 303v6l43 32 45-25v-6M828 309l32-10 32 12-32 18zM852 303l-8 15M860 335v6"/>
<path d="M932 310l30-13 22 14-28 15zM962 330l40-15 30 18-35 18zM962 338l35 20 35-20M996 358v8M982 340l25-12"/>
<!-- statue -->
<path d="M955 367l-3 12a12 12 0 1 0 8 0zM948 392l-10 6-8 28 8 18M962 392l12 8 4 22-8 18M944 405l6 20 5 20 8-5 4-25M948 420h16M934 417l-6 4M978 402l5 22M932 447l28 20 27-15-27-17zM932 447v6l28 19 27-16v-6M925 385v20l-10 8"/>
<!-- stairs + mid -->
<path d="M1093 385L1133 372 1157 407 1113 427ZM1100 397L1140 382M1105 407L1146 392M1108 417L1152 400"/>
<path d="M1080 427l30-5 15 6-3 20-5 30M1088 430l-10 45-10 20M1100 432l-5 45M1078 477l10 8 17 8 15-8M1124 440l12 28 8 15-40 30M1120 480l15 5 25-10 -3 25-30 15M1130 515l-30 15-30-20M1100 530l30 13 35-18v-28M1130 543v-18"/>
<ellipse cx="1080" cy="494" rx="9" ry="7"/><ellipse cx="1092" cy="490" rx="8" ry="8"/><ellipse cx="1100" cy="498" rx="9" ry="7"/><ellipse cx="1085" cy="505" rx="9" ry="8"/><ellipse cx="1103" cy="508" rx="8" ry="7"/><ellipse cx="1025" cy="505" rx="9" ry="7"/><ellipse cx="1040" cy="508" rx="9" ry="9"/><ellipse cx="1012" cy="513" rx="9" ry="7"/><ellipse cx="1030" cy="520" rx="10" ry="7"/><ellipse cx="1050" cy="520" rx="8" ry="8"/><ellipse cx="1022" cy="530" rx="8" ry="7"/>
<circle cx="960" cy="510" r="9"/><circle cx="942" cy="520" r="9"/><circle cx="980" cy="500" r="9"/><circle cx="925" cy="528" r="9"/><circle cx="995" cy="492" r="9"/><circle cx="965" cy="488" r="6"/><circle cx="985" cy="520" r="7"/><circle cx="905" cy="535" r="9"/><circle cx="943" cy="540" r="7"/>
<path d="M893 520l50 88M905 512l50 88M920 510l30 48M880 555l-15-20 28-15M1000 480L880 548"/>
<!-- fountain -->
<ellipse cx="737" cy="457" rx="48" ry="26"/><ellipse cx="737" cy="462" rx="48" ry="26"/><ellipse cx="737" cy="450" rx="27" ry="14"/><path d="M710 450v10a27 14 0 0 0 54 0v-10"/><ellipse cx="737" cy="453" rx="38" ry="20"/>
<!-- stone path -->
<path d="M763 340c20 5 50 15 77 30l-13 15c-10 5-20 0-30-5 0-10-15-15-35-25zM493 473l60-36c8-5 12 5 5 10l-62 38zM500 478L610 535 700 480M610 535l-7 8M495 480l115 60"/>
<ellipse cx="684" cy="372" rx="16" ry="6"/>
<!-- fence rails -->
<path d="M431 458L828 248M431 472L828 262M431 468L505 505M505 505L612 560M612 560L660 590M660 590L703 612M703 612L750 640M750 640L815 680M815 680L885 716"/>
<path d="M1100 460L1415 620"/>
<g stroke="#dedede" stroke-width="12" stroke-dasharray=".7 3"><path d="M431 465L582 388M586 383L630 362M636 345L680 323M684 330L787 275M790 275L828 255"/><path d="M431 468L505 505M505 505L540 522M600 552L655 580M662 585L700 608M705 612L748 640"/><path d="M1050 400L1080 385M1043 440L1000 462M1000 470L957 490M957 490L931 505M1105 440L1147 455M1150 455L1187 475M1190 472L1233 497M1245 505L1282 522M1295 530L1328 545M1340 545L1373 565M1380 565L1415 590"/></g>
<use href="#post" x="475" y="415"/><use href="#post" x="532" y="392"/><use href="#post" x="580" y="367"/><use href="#post" x="632" y="342"/><use href="#post" x="678" y="318"/><use href="#post" x="787" y="267"/>
<use href="#post" x="457" y="465"/><use href="#post" x="503" y="490"/><use href="#post" x="612" y="540"/><use href="#post" x="656" y="567"/><use href="#post" x="701" y="585"/>
<use href="#post" x="1083" y="378"/><use href="#post" x="1038" y="398"/><use href="#post" x="1080" y="418"/><use href="#post" x="1043" y="445"/><use href="#post" x="1002" y="465"/><use href="#post" x="957" y="483"/>
<use href="#post" x="1147" y="442"/><use href="#post" x="1187" y="462"/><use href="#post" x="1233" y="485"/><use href="#post" x="1282" y="507"/><use href="#post" x="1328" y="527"/><use href="#post" x="1373" y="545"/>
<!-- round bollards -->
<path d="M747 630h8v22h-8zM813 665h8v20h-8zM881 695h8v20h-8zM1195 682h8v20h-8zM1265 650h8v20h-8zM1300 620h8v20h-8zM1330 620h8v20h-8zM1369 588h8v20h-8zM1399 588h8v20h-8zM747 636h8M747 642h8M813 671h8M813 677h8M881 701h8M1195 688h8M1195 694h8M1265 656h8M1265 662h8M1300 626h8M1330 626h8M1369 594h8M1399 594h8"/>
<path d="M1000 716L1415 495M1210 690L1415 575"/>
<!-- bushes lower -->
<ellipse cx="820" cy="525" rx="25" ry="14"/><ellipse cx="800" cy="560" rx="25" ry="22"/><ellipse cx="840" cy="560" rx="25" ry="20"/><ellipse cx="810" cy="600" rx="15" ry="20"/><ellipse cx="775" cy="620" rx="15" ry="20"/><ellipse cx="755" cy="660" rx="12" ry="18"/><ellipse cx="770" cy="640" rx="14" ry="20"/><path d="M840 520c5 40 5 70-5 105M855 545l20 50-12 30"/>
<path d="M910 700c25-15 40-30 60-50l5 20 15-25 10 15-10 40M930 716l-15-15"/>
<!-- rocks lower -->
<path d="M985 680c5-25 25-30 35-15l5 20-30 3zM1040 668l16-10 15 16-3 18-17 10-15-14zM1072 695l22-12 22 18-3 15-25 10-20-16zM1022 680c10 0 15 5 20 3"/>
<!-- pandas -->
<use href="#panda" x="864" y="660"/><use href="#panda" x="1236" y="593"/><use href="#panda" x="1297" y="580"/>
<path d="M858 640c-20-15-35-5-35 12 0 10 5 18 18 24M1242 578c14-10 36-10 36 10 4 12-4 26-14 22"/>
</g>
<!-- gate -->
<g fill="none" stroke="#4c4430" stroke-width="2"><path d="M549 510l47 30v37l-46-30zM573 492c-6 0-6 8 0 8v24M563 505c0 14 16 14 18 2M556 515l15 25 15-15M555 535l15 10-3 20 18 10M570 555l-15-5M580 548l14 14M549 525l22 10M560 520l-3 20M585 535l-4 20M572 543l20 10M553 552l8-8M572 565l8-8M588 570l6-12M566 552l6 6"/></g>
<!-- magenta rect -->
<rect x="840" y="295" width="195" height="347" fill="none" stroke="#c474d6" stroke-width="1.800"/>
<!-- sprites -->
<g><use href="#gem" x="786" y="212"/><use href="#gem" x="789" y="373"/><use href="#gem" x="685" y="411"/><use href="#gem" x="799" y="428"/><use href="#gem" x="764" y="457"/><use href="#gem" x="572" y="533"/><use href="#gem" x="1014" y="483"/><use href="#gem" x="883" y="560"/><use href="#gem" x="1109" y="633"/></g>
<g><rect x="854" y="312" width="24" height="9" rx="2" fill="#49a820"/><path d="M858 316h16M862 314h4M868 318h5" stroke="#111"/><rect x="926" y="609" width="24" height="9" rx="2" fill="#49a820"/><path d="M930 613h16M934 611h4M940 615h5" stroke="#111"/></g>
<path d="M1010 468l5-5 3 2 5-2v6h-13z" fill="#222"/>
<!-- axis labels -->
<g font-family="'Liberation Sans',sans-serif" font-size="12" fill="#aaa">
<text x="437" y="247">1,500</text><text x="437" y="377">1,000</text><text x="437" y="506">500</text><text x="436" y="637">0</text>
<text x="455" y="707">-1,500</text><text x="586" y="707">-1,000</text><text x="716" y="707">-500</text><text x="844" y="707">0</text><text x="975" y="707">500</text><text x="1103" y="707">1,000</text><text x="1235" y="707">1,500</text><text x="1364" y="707">2,000</text>
</g>
<!-- gizmo -->
<rect x="597" y="341" width="26" height="25" fill="#7f7fe6"/>
<path d="M610 341h13v13" fill="none" stroke="#1414f0" stroke-width="2"/>
<rect x="552.500" y="323" width="88.500" height="86" fill="none" stroke="#1a9cff" stroke-width="1.200"/>
<path d="M597 366V226" stroke="#33e633" stroke-width="1.600"/>
<path d="M597 366H737" stroke="#f43b3b" stroke-width="1.600"/>
<path d="M597 202l10 24h-20z" fill="#0e9a14"/>
<path d="M762 366l-25-10v20z" fill="#b30000"/>
</g>
<!-- annotations -->
<ellipse cx="597" cy="370" rx="79" ry="76" fill="none" stroke="#f23333" stroke-width="2.500"/>
<ellipse cx="148" cy="295" rx="37" ry="25" fill="none" stroke="#e83434" stroke-width="2"/>
<ellipse cx="1641" cy="501" rx="71" ry="35" transform="rotate(3 1641 501)" fill="none" stroke="#ec3b3b" stroke-width="2"/>
<path d="M-1 63c2-2 5-1 5 2 0 2-3 2-3 5" fill="none" stroke="#fff" stroke-width="1.500"/>
<path d="M9 95l4-4 4 4M10 920l4 4 4-4" fill="none" stroke="#333" stroke-width="1.500"/>
</svg>
</body></html>
